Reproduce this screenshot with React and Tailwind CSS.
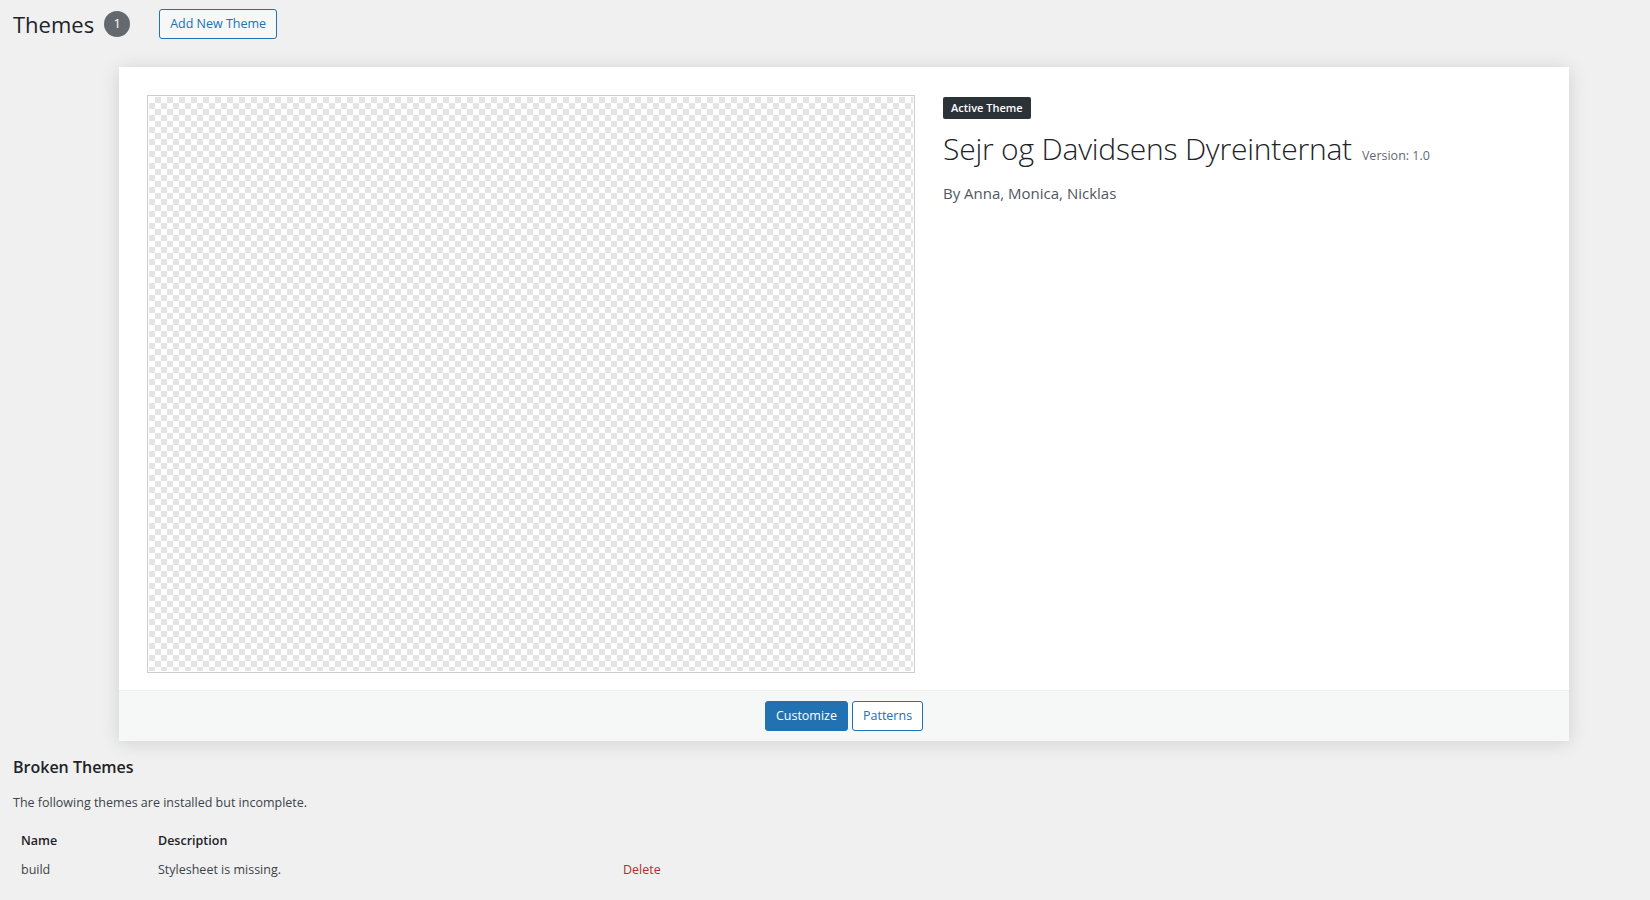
export default function App() {
  return (
    <div className="min-h-screen w-full bg-[#f0f0f1] font-['Open_Sans',sans-serif] text-[12.5px] text-[#3c434a]">
      {/* Header */}
      <div className="flex items-center px-[13px] pt-[9px]">
        <h1 className="text-[22px] leading-[30px] font-normal text-[#1d2327]">Themes</h1>
        <span className="ml-[10px] flex h-[26px] w-[26px] items-center justify-center rounded-full bg-[#646970] text-[13px] font-medium text-white">1</span>
        <button className="ml-[29px] h-[30px] rounded-[3px] border border-[#2271b1] bg-[#f6f7f7] px-[10px] text-[12.5px] text-[#2271b1]">Add New Theme</button>
      </div>

      {/* Theme card */}
      <div className="ml-[119px] mt-[28px] w-[1450px] bg-white shadow-[0_2px_18px_rgba(0,0,0,0.13)]">
        <div className="flex gap-[29px] px-[29px] pt-[29px] pb-[18px]">
          <div className="h-[576px] w-[766px] shrink-0 border border-white bg-[image:conic-gradient(#e4e4e4_25%,#ffffff_0_50%,#e4e4e4_0_75%,#ffffff_0)] bg-[length:12px_12px] shadow-[0_0_0_1px_rgba(0,0,0,0.2)]"></div>
          <div className="pt-[1px]">
            <span className="inline-block h-[22px] rounded-[2px] bg-[#2c3338] px-[8px] text-[11px] font-semibold leading-[22px] text-white">Active Theme</span>
            <h2 className="mt-[10px] text-[30px] font-light leading-[40px] tracking-[-0.2px] text-[#1d2327]">
              Sejr og Davidsens Dyreinternat
              <span className="ml-[10px] text-[12.5px] font-normal tracking-normal text-[#646970]">Version: 1.0</span>
            </h2>
            <p className="mt-[6px] text-[15px] leading-[22px] text-[#50575e]">By Anna, Monica, Nicklas</p>
          </div>
        </div>
        <div className="flex justify-center gap-[4px] border-t border-[#f0f0f1] bg-[#f6f7f7] py-[10px]">
          <button className="h-[30px] rounded-[3px] border border-[#2271b1] bg-[#2271b1] px-[10px] text-[12.5px] text-white">Customize</button>
          <button className="h-[30px] rounded-[3px] border border-[#2271b1] bg-white px-[10px] text-[12.5px] text-[#2271b1]">Patterns</button>
        </div>
      </div>

      {/* Broken themes */}
      <div className="px-[13px]">
        <h3 className="mt-[14px] text-[16px] font-semibold leading-[24px] text-[#1d2327]">Broken Themes</h3>
        <p className="mt-[14px] leading-[20px]">The following themes are installed but incomplete.</p>
        <div className="mt-[13px] grid grid-cols-[137px_465px_auto] leading-[21px]">
          <div className="px-[8px] py-[4px] font-semibold text-[#1d2327]">Name</div>
          <div className="px-[8px] py-[4px] font-semibold text-[#1d2327]">Description</div>
          <div className="px-[8px] py-[4px]"></div>
          <div className="px-[8px] py-[4px]">build</div>
          <div className="px-[8px] py-[4px]">Stylesheet is missing.</div>
          <div className="px-[8px] py-[4px] text-[#b32d2e]">Delete</div>
        </div>
      </div>
    </div>
  );
}
